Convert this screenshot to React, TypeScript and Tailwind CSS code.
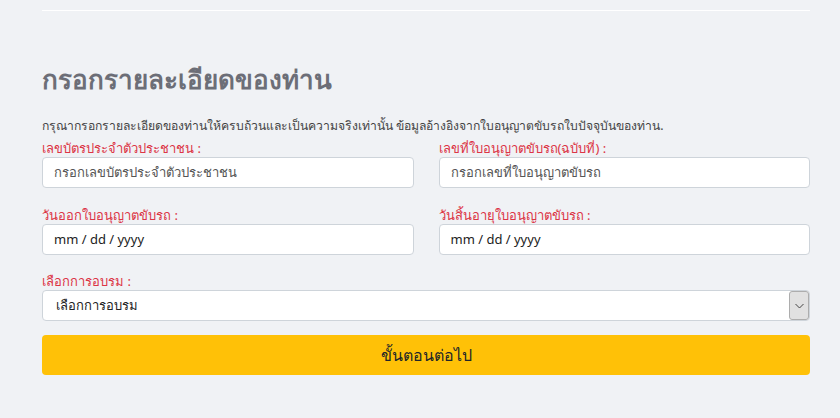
import React from "react";

function Field({ label, children }: { label: string; children: React.ReactNode }) {
  return (
    <div className="flex flex-col">
      <label className="text-[13px] leading-[17px] text-[#dc3545] mb-0">{label}</label>
      {children}
    </div>
  );
}

function TextBox({ text, dim }: { text: string; dim?: boolean }) {
  return (
    <div
      className={`h-[31px] bg-white border border-[#ced4da] rounded-[4px] flex items-center pl-[11px] text-[13px] ${
        dim ? "text-[#555]" : "text-[#222]"
      }`}
    >
      {text}
    </div>
  );
}

export default function App() {
  return (
    <div
      className="w-[840px] h-[418px] bg-[#f0f2f5] overflow-hidden"
      style={{ fontFamily: "Tahoma, 'Noto Sans', 'DejaVu Sans', sans-serif" }}
    >
      <div className="mx-[42px] w-[768px] pt-[10px]">
        <div className="h-[1px] bg-white" />
        <h1 className="mt-[52px] text-[26px] leading-[32px] font-bold text-[#6c6e77]">
          กรอกรายละเอียดของท่าน
        </h1>
        <p className="mt-[22px] text-[12.2px] leading-[18px] text-[#444]">
          กรุณากรอกรายละเอียดของท่านให้ครบถ้วนและเป็นความจริงเท่านั้น ข้อมูลอ้างอิงจากใบอนุญาตขับรถใบปัจจุบันของท่าน.
        </p>
        <div className="grid grid-cols-2 gap-x-[25px] gap-y-[19px] mt-[5px]">
          <Field label="เลขบัตรประจำตัวประชาชน :">
            <TextBox text="กรอกเลขบัตรประจำตัวประชาชน" dim />
          </Field>
          <Field label="เลขที่ใบอนุญาตขับรถ(ฉบับที่) :">
            <TextBox text="กรอกเลขที่ใบอนุญาตขับรถ" dim />
          </Field>
          <Field label="วันออกใบอนุญาตขับรถ :">
            <TextBox text="mm / dd / yyyy" />
          </Field>
          <Field label="วันสิ้นอายุใบอนุญาตขับรถ :">
            <TextBox text="mm / dd / yyyy" />
          </Field>
        </div>
        <div className="mt-[18px]">
          <Field label="เลือกการอบรม :">
            <div className="h-[31px] bg-white border border-[#ced4da] rounded-[4px] flex items-stretch text-[13px] text-[#222]">
              <div className="flex-1 flex items-center pl-[13px]">เลือกการอบรม</div>
              <div className="w-[20px] bg-[#e1e1e1] border border-[#adadad] rounded-[3px] flex items-center justify-center">
                <svg width="9" height="6" viewBox="0 0 9 6">
                  <path d="M0.5 1 L4.5 5 L8.5 1" fill="none" stroke="#444" strokeWidth="1" />
                </svg>
              </div>
            </div>
          </Field>
        </div>
        <button className="mt-[14px] w-full h-[40px] bg-[#ffc107] rounded-[4px] text-[16px] text-[#212529] flex items-center justify-center">
          ขั้นตอนต่อไป
        </button>
      </div>
    </div>
  );
}
